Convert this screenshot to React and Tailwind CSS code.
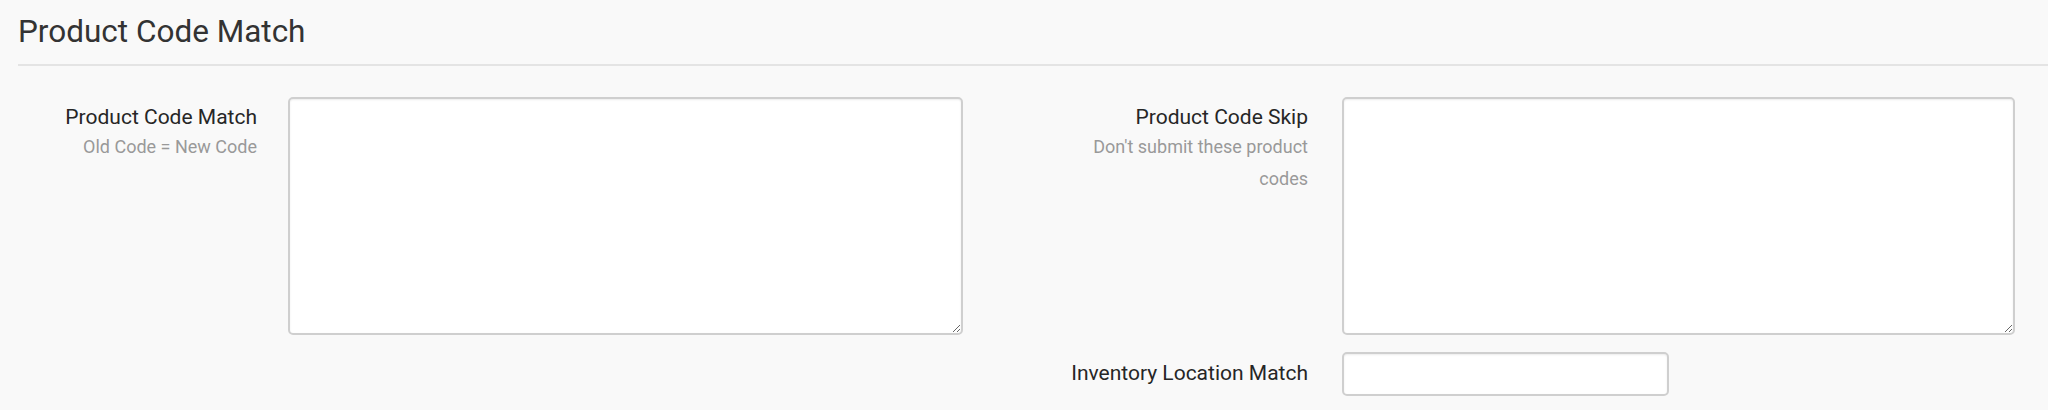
import React from 'react';

const fieldClass =
    'block bg-white border-2 border-[#cfcfcf] rounded-[5px] shadow-[inset_0_1px_2px_rgba(0,0,0,0.08)] outline-none';

const Label = ({ title, help, className = '' }) => (
    <div className={`w-[240px] shrink-0 text-right ${className}`}>
        <div className="text-[21px] leading-[28px] text-[#262626]">{title}</div>
        {help && <div className="text-[18px] leading-[32px] text-[#999]">{help}</div>}
    </div>
);

const App = () => {
    return (
        <div className="min-h-[410px] bg-[#f9f9f9] font-['Roboto',sans-serif] text-[#333]">
            {/* Page header */}
            <div className="ml-[18px] border-b-2 border-[#e4e4e4] pt-[15px] pb-[15px]">
                <h1 className="text-[31.5px] leading-[34px] font-normal text-[#333]">Product Code Match</h1>
            </div>

            {/* Form */}
            <div className="flex items-start pl-[17px] pt-[31px]">
                <div className="flex items-start gap-[31px]">
                    <Label title="Product Code Match" help="Old Code = New Code" className="pt-[6px]" />
                    <textarea className={`${fieldClass} w-[675px] h-[238px]`} />
                </div>

                <div className="ml-[105px] flex flex-col gap-[17px]">
                    <div className="flex items-start gap-[34px]">
                        <Label title="Product Code Skip" help="Don't submit these product codes" className="pt-[6px]" />
                        <textarea className={`${fieldClass} w-[673px] h-[238px]`} />
                    </div>
                    <div className="flex items-start gap-[34px]">
                        <Label title="Inventory Location Match" className="pt-[7px]" />
                        <input type="text" className={`${fieldClass} w-[327px] h-[44px]`} />
                    </div>
                </div>
            </div>
        </div>
    );
};

export default App;
